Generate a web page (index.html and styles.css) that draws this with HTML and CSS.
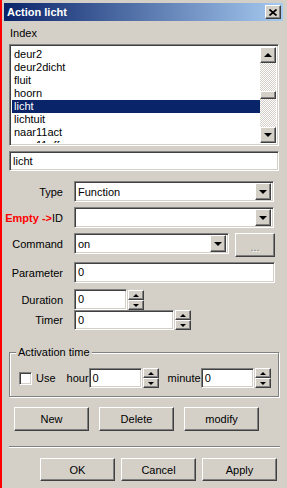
FILE: index.html
```html
<!DOCTYPE html>
<html lang="nl">
<head>
  <meta charset="UTF-8" />
  <title>Action licht</title>
  <link rel="stylesheet" href="styles.css">
</head>
<body>
  <div class="dialog">
    <div class="titlebar">
      <span class="title">Action licht</span>
      <span class="close-btn">
        <svg width="8" height="7" viewBox="0 0 8 7"><path d="M0.5 0.5l7 6M7.5 0.5l-7 6" stroke="#000" stroke-width="1.7" fill="none"/></svg>
      </span>
    </div>

    <div class="content">
      <div class="index-label">Index</div>
      <div class="listbox sunken">
        <ul class="list-items">
          <li>deur2</li>
          <li>deur2dicht</li>
          <li>fluit</li>
          <li>hoorn</li>
          <li class="selected">licht</li>
          <li>lichtuit</li>
          <li>naar11act</li>
          <li>naar11off</li>
        </ul>
        <div class="scrollbar">
          <div class="sb-btn raised"><span class="tri-up"></span></div>
          <div class="sb-track"><div class="sb-thumb raised"></div></div>
          <div class="sb-btn raised"><span class="tri-down"></span></div>
        </div>
      </div>

      <div class="textbox sunken name-box">licht</div>

      <div class="form-row row-type">
        <div class="label">Type</div>
        <div class="combo sunken w-full">
          <span class="combo-text">Function</span>
          <span class="combo-btn raised"><span class="tri-down"></span></span>
        </div>
      </div>

      <div class="form-row row-id">
        <div class="label"><span class="empty-hint">Empty -&gt;</span>ID</div>
        <div class="combo sunken w-full">
          <span class="combo-text"></span>
          <span class="combo-btn raised"><span class="tri-down"></span></span>
        </div>
      </div>

      <div class="form-row row-command">
        <div class="label">Command</div>
        <div class="combo sunken w-command">
          <span class="combo-text">on</span>
          <span class="combo-btn raised"><span class="tri-down"></span></span>
        </div>
        <div class="btn raised dots-btn">...</div>
      </div>

      <div class="form-row row-param">
        <div class="label">Parameter</div>
        <div class="textbox sunken w-param">0</div>
      </div>

      <div class="form-row row-duration">
        <div class="label">Duration</div>
        <div class="textbox sunken w-small">0</div>
        <div class="spinner">
          <div class="spin-btn raised"><span class="spin-up"></span></div>
          <div class="spin-btn raised"><span class="spin-down"></span></div>
        </div>
      </div>

      <div class="form-row row-timer">
        <div class="label">Timer</div>
        <div class="textbox sunken w-timer">0</div>
        <div class="spinner">
          <div class="spin-btn raised"><span class="spin-up"></span></div>
          <div class="spin-btn raised"><span class="spin-down"></span></div>
        </div>
      </div>

      <fieldset class="group">
        <legend>Activation time</legend>
        <div class="group-row">
          <span class="checkbox sunken"></span>
          <span class="use-label">Use</span>
          <span class="hour-label">hour</span>
          <div class="textbox sunken w-small">0</div>
          <div class="spinner">
            <div class="spin-btn raised"><span class="spin-up"></span></div>
            <div class="spin-btn raised"><span class="spin-down"></span></div>
          </div>
          <span class="minute-label">minute</span>
          <div class="textbox sunken w-small">0</div>
          <div class="spinner">
            <div class="spin-btn raised"><span class="spin-up"></span></div>
            <div class="spin-btn raised"><span class="spin-down"></span></div>
          </div>
        </div>
      </fieldset>

      <div class="action-buttons">
        <div class="btn raised">New</div>
        <div class="btn raised">Delete</div>
        <div class="btn raised">modify</div>
      </div>

      <div class="separator"></div>

      <div class="dialog-buttons">
        <div class="btn raised">OK</div>
        <div class="btn raised">Cancel</div>
        <div class="btn raised">Apply</div>
      </div>
    </div>
  </div>
</body>
</html>
```

FILE: styles.css
```css
* {
  margin: 0;
  padding: 0;
  box-sizing: border-box;
}

body {
  background-color: #d4d0c8;
  font-family: "Liberation Sans", Arial, sans-serif;
  font-size: 11px;
  color: #000;
}

.dialog {
  width: 287px;
  height: 488px;
  border-left: 2px solid #ff0000;
  overflow: hidden;
}

/* bevels */
.sunken {
  background-color: #fff;
  border: 1px solid;
  border-color: #808080 #fff #fff #808080;
  box-shadow: inset 1px 1px 0 #404040, inset -1px -1px 0 #d4d0c8;
}

.raised {
  background-color: #d4d0c8;
  border: 1px solid;
  border-color: #fff #404040 #404040 #fff;
  box-shadow: inset -1px -1px 0 #808080, inset 1px 1px 0 #d4d0c8;
}

/* title bar */
.titlebar {
  margin: 3px 4px 0 2px;
  height: 18px;
  background: linear-gradient(to right, #0a246a, #a6caf0);
  display: flex;
  align-items: center;
  justify-content: space-between;
  padding: 0 2px 0 3px;
}

.title {
  color: #fff;
  font-weight: bold;
  font-size: 11px;
}

.close-btn {
  width: 16px;
  height: 14px;
  display: flex;
  align-items: center;
  justify-content: center;
  background-color: #d4d0c8;
  border: 1px solid;
  border-color: #fff #404040 #404040 #fff;
  box-shadow: inset -1px -1px 0 #808080;
}

.content {
  padding: 0 8px 0 7px;
}

.index-label {
  margin-top: 6px;
  line-height: 13px;
  padding-left: 1px;
}

/* list */
.listbox {
  margin-top: 4px;
  height: 102px;
  display: flex;
  padding: 2px;
  overflow: hidden;
}

.list-items {
  list-style: none;
  flex: 1;
  padding-top: 1px;
  overflow: hidden;
}

.list-items li {
  height: 13px;
  line-height: 13px;
  padding-left: 2px;
  white-space: nowrap;
}

.list-items li.selected {
  background-color: #0a246a;
  color: #fff;
}

.scrollbar {
  width: 16px;
  display: flex;
  flex-direction: column;
}

.sb-btn {
  width: 16px;
  height: 16px;
  display: flex;
  align-items: center;
  justify-content: center;
}

.sb-track {
  flex: 1;
  background: repeating-conic-gradient(#fff 0 25%, #d4d0c8 0 50%) 0 0 / 2px 2px;
}

.sb-thumb {
  margin-top: 28px;
  height: 8px;
}

.tri-up {
  width: 0;
  height: 0;
  border: 4px solid transparent;
  border-top-width: 0;
  border-bottom-color: #000;
}

.tri-down {
  width: 0;
  height: 0;
  border: 4px solid transparent;
  border-bottom-width: 0;
  border-top-color: #000;
}

.spin-up {
  width: 0;
  height: 0;
  border: 3px solid transparent;
  border-top-width: 0;
  border-bottom-color: #000;
}

.spin-down {
  width: 0;
  height: 0;
  border: 3px solid transparent;
  border-bottom-width: 0;
  border-top-color: #000;
}

/* inputs */
.textbox {
  height: 21px;
  line-height: 17px;
  padding: 1px 3px;
  white-space: nowrap;
}

.name-box {
  margin-top: 5px;
  height: 20px;
  width: 270px;
}

.combo {
  height: 21px;
  display: flex;
  align-items: center;
  padding: 2px;
}

.combo-text {
  flex: 1;
  padding-left: 1px;
}

.combo-btn {
  width: 16px;
  height: 17px;
  display: flex;
  align-items: center;
  justify-content: center;
}

.form-row {
  display: flex;
  align-items: center;
}

.form-row .label {
  width: 54px;
  margin-right: 11px;
  display: flex;
  justify-content: flex-end;
  white-space: nowrap;
}

.empty-hint {
  color: #ff0000;
  font-weight: bold;
}

.row-type { margin-top: 10px; }
.row-id { margin-top: 5px; }
.row-command { margin-top: 5px; align-items: flex-start; height: 24px; }
.row-command .label { height: 21px; align-items: center; }
.row-param { margin-top: 5px; }
.row-duration { margin-top: 6px; }
.row-timer { height: 20px; }
.row-timer .textbox { height: 20px; }

.w-full { width: 200px; }
.w-command { width: 155px; }
.w-param { width: 201px; }
.w-small { width: 53px; }
.w-timer { width: 100px; }

.spinner {
  margin-left: 1px;
  display: flex;
  flex-direction: column;
  padding-top: 1px;
}

.spin-btn {
  width: 16px;
  height: 10px;
  display: flex;
  align-items: center;
  justify-content: center;
}

.row-timer .spinner { padding-top: 0; }

/* buttons */
.btn {
  width: 75px;
  height: 24px;
  display: flex;
  align-items: center;
  justify-content: center;
}

.dots-btn {
  width: 40px;
  margin-left: 6px;
  padding-top: 3px;
  color: #808080;
  text-shadow: 1px 1px 0 #fff;
}

/* group box */
.group {
  margin-top: 16px;
  width: 270px;
  border: 1px solid #808080;
  box-shadow: 1px 1px 0 #fff, inset 1px 1px 0 #fff;
  padding: 0 0 8px 9px;
}

.group legend {
  margin-left: -3px;
  padding: 0 2px;
  line-height: 13px;
  background-color: #d4d0c8;
}

.group-row {
  margin-top: 9px;
  height: 20px;
  display: flex;
  align-items: center;
}

.group-row .textbox {
  height: 20px;
}

.group-row .spinner {
  padding-top: 0;
}

.checkbox {
  width: 13px;
  height: 13px;
}

.use-label {
  margin-left: 4px;
}

.hour-label {
  margin-left: 11px;
}

.minute-label {
  margin-left: 9px;
}

.action-buttons {
  margin-top: 10px;
  margin-left: 5px;
  display: flex;
  gap: 10px;
}

.separator {
  margin-top: 15px;
  width: 271px;
  height: 2px;
  border-top: 1px solid #808080;
  border-bottom: 1px solid #fff;
}

.dialog-buttons {
  margin-top: 10px;
  margin-right: 2px;
  display: flex;
  justify-content: flex-end;
  gap: 6px;
}

.dialog-buttons .btn {
  height: 23px;
}
```
